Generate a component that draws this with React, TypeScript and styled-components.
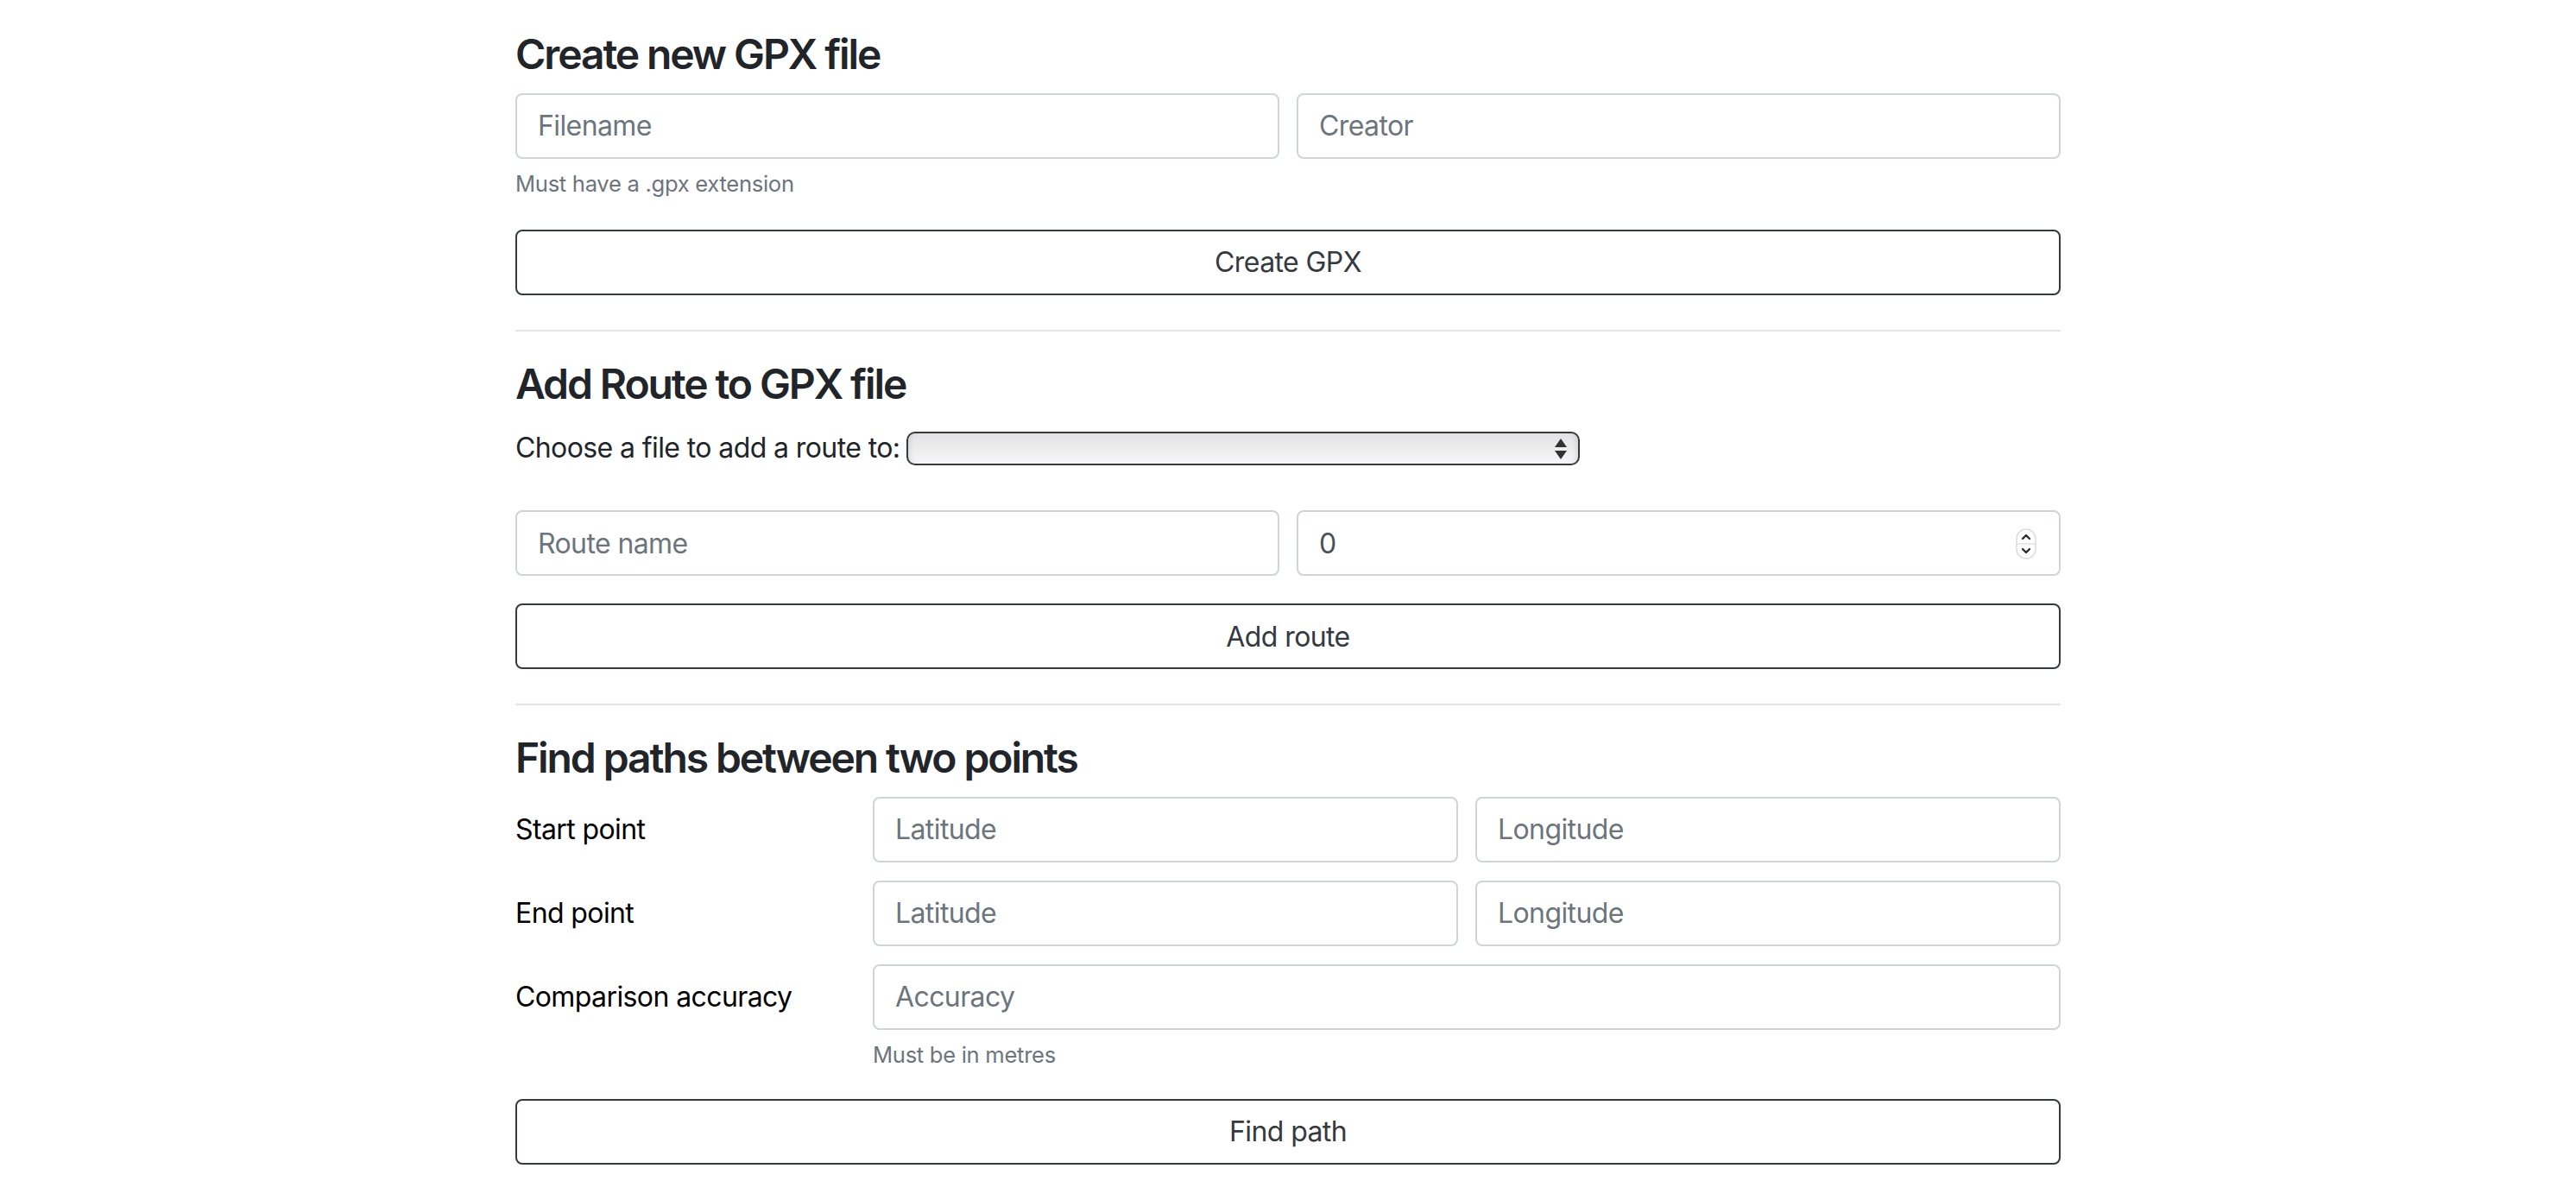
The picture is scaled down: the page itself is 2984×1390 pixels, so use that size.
import React from "react";
import styled, { createGlobalStyle } from "styled-components";

const GlobalStyle = createGlobalStyle`
  html, body { margin: 0; padding: 0; background: #fff; }
  body {
    font-family: Inter, "Liberation Sans", Arial, sans-serif;
    color: #212529;
    -webkit-font-smoothing: antialiased;
  }
  * { box-sizing: border-box; }
`;

const Page = styled.main`
  width: 1790px;
  margin: 0 auto;
  padding-top: 34px;
  padding-bottom: 40px;
  letter-spacing: -0.6px;
`;

const Heading = styled.h4`
  margin: 0 0 16px;
  font-size: 48px;
  font-weight: 600;
  line-height: 1.2;
  color: #212529;
  letter-spacing: -2.1px;
`;

const Divider = styled.hr`
  margin: 40px 0 32px;
  border: 0;
  border-top: 2px solid rgba(0, 0, 0, 0.1);
  height: 0;
`;

const TwoCols = styled.div`
  display: grid;
  grid-template-columns: 1fr 1fr;
  column-gap: 20px;
`;

const Field = styled.div`
  position: relative;
`;

const Input = styled.input`
  display: block;
  width: 100%;
  height: 76px;
  padding: 0 24px;
  font-family: inherit;
  font-size: 32px;
  letter-spacing: -0.6px;
  color: #495057;
  background: #fff;
  border: 2px solid #ced4da;
  border-radius: 8px;
  outline: none;
  appearance: textfield;
  &::placeholder { color: #6c757d; opacity: 1; }
  &::-webkit-outer-spin-button,
  &::-webkit-inner-spin-button { -webkit-appearance: none; margin: 0; }
`;

const HelpText = styled.small`
  display: block;
  margin-top: 8px;
  font-size: 25.6px;
  line-height: 42px;
  letter-spacing: -0.3px;
  color: #6c757d;
`;

const Button = styled.button<{ $top: number }>`
  display: block;
  width: 100%;
  height: 76px;
  margin-top: ${(p) => p.$top}px;
  font-family: inherit;
  font-size: 32px;
  letter-spacing: -0.6px;
  color: #343a40;
  background: transparent;
  border: 2px solid #343a40;
  border-radius: 8px;
  cursor: pointer;
`;

const ChooseRow = styled.div`
  display: flex;
  align-items: center;
  gap: 8px;
  height: 60px;
  margin-bottom: 42px;
`;

const Text = styled.span`
  font-size: 32px;
  line-height: 48px;
  color: #212529;
`;

const FakeSelect = styled.div`
  position: relative;
  width: 780px;
  height: 39px;
  border: 2px solid #363a3e;
  border-radius: 10px;
  background: linear-gradient(to bottom, #e2e2e2 0%, #ececec 45%, #f6f6f6 100%);
  box-shadow: inset 8px 0 6px -6px rgba(0, 0, 0, 0.1),
    inset -8px 0 6px -6px rgba(0, 0, 0, 0.1);
`;

const SelectArrows = styled.svg`
  position: absolute;
  right: 12px;
  top: 5px;
`;

const Spinner = styled.svg`
  position: absolute;
  right: 28px;
  top: 21px;
`;

const PointsGrid = styled.div`
  display: grid;
  grid-template-columns: 394px 1fr 1fr;
  column-gap: 20px;
  row-gap: 21px;
  align-items: center;
`;

const RowLabel = styled.label`
  font-size: 32px;
  line-height: 48px;
  color: #000;
`;

const Wide = styled.div`
  grid-column: 2 / 4;
`;

const HelpCell = styled.div`
  grid-column: 2 / 4;
  margin-top: -21px;
`;

export default function App() {
  return (
    <>
      <GlobalStyle />
      <Page>
        <Heading>Create new GPX file</Heading>
        <TwoCols>
          <Field>
            <Input type="text" placeholder="Filename" />
            <HelpText>Must have a .gpx extension</HelpText>
          </Field>
          <Field>
            <Input type="text" placeholder="Creator" />
          </Field>
        </TwoCols>
        <Button $top={32}>Create GPX</Button>

        <Divider />

        <Heading>Add Route to GPX file</Heading>
        <ChooseRow>
          <Text>Choose a file to add a route to:</Text>
          <FakeSelect>
            <SelectArrows width="16" height="26" viewBox="0 0 16 26">
              <path d="M8 1 L15 11 L1 11 Z" fill="#333" />
              <path d="M1 15 L15 15 L8 25 Z" fill="#333" />
            </SelectArrows>
          </FakeSelect>
        </ChooseRow>
        <TwoCols>
          <Field>
            <Input type="text" placeholder="Route name" />
          </Field>
          <Field>
            <Input type="number" defaultValue={0} />
            <Spinner width="24" height="36" viewBox="0 0 24 36">
              <rect x="1" y="1" width="22" height="34" rx="11" fill="#fff" stroke="#dcdcdc" strokeWidth="1.5" />
              <line x1="2" y1="18" x2="22" y2="18" stroke="#e2e2e2" strokeWidth="1.5" />
              <path d="M8 12 L12 8 L16 12" fill="none" stroke="#2b2b2b" strokeWidth="2.4" strokeLinecap="round" strokeLinejoin="round" />
              <path d="M8 24 L12 28 L16 24" fill="none" stroke="#2b2b2b" strokeWidth="2.4" strokeLinecap="round" strokeLinejoin="round" />
            </Spinner>
          </Field>
        </TwoCols>
        <Button $top={32}>Add route</Button>

        <Divider />

        <Heading>Find paths between two points</Heading>
        <PointsGrid>
          <RowLabel>Start point</RowLabel>
          <Input type="text" placeholder="Latitude" />
          <Input type="text" placeholder="Longitude" />

          <RowLabel>End point</RowLabel>
          <Input type="text" placeholder="Latitude" />
          <Input type="text" placeholder="Longitude" />

          <RowLabel>Comparison accuracy</RowLabel>
          <Wide>
            <Input type="text" placeholder="Accuracy" />
          </Wide>
          <span />
          <HelpCell>
            <HelpText>Must be in metres</HelpText>
          </HelpCell>
        </PointsGrid>
        <Button $top={30}>Find path</Button>
      </Page>
    </>
  );
}
